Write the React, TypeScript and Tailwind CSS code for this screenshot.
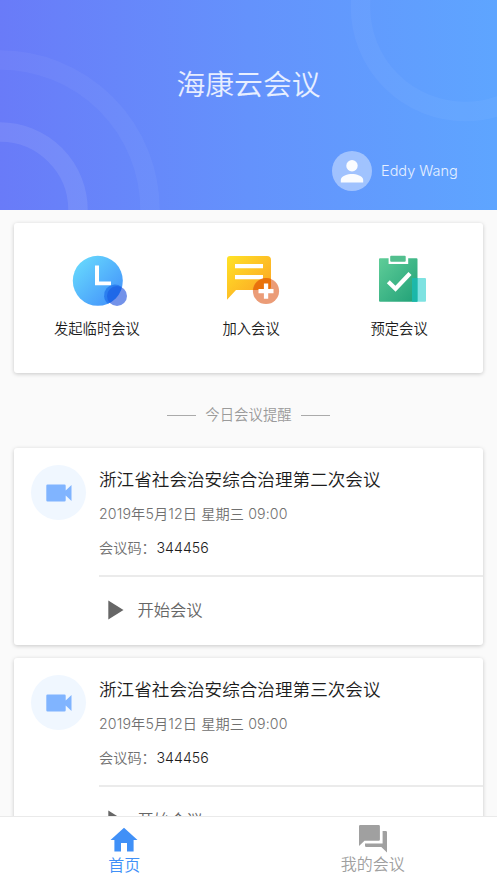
import { useState } from 'react'

type Reuniao = { titulo: string; data: string; codigo: string }

const reunioes: Reuniao[] = [
  { titulo: '浙江省社会治安综合治理第二次会议', data: '2019年5月12日 星期三 09:00', codigo: '344456' },
  { titulo: '浙江省社会治安综合治理第三次会议', data: '2019年5月12日 星期三 09:00', codigo: '344456' }
]

function ClockIcon() {
  return (
    <svg width="56" height="52" viewBox="0 0 56 52">
      <defs>
        <linearGradient id="clock" x1="0" y1="0" x2="1" y2="1">
          <stop offset="0" stopColor="#6be0fd" />
          <stop offset="1" stopColor="#3f8bfb" />
        </linearGradient>
      </defs>
      <circle cx="25.8" cy="25.8" r="25" fill="url(#clock)" />
      <path d="M23 10.5h4v16h12v3.8H23z" fill="#fff" />
      <circle cx="45" cy="41" r="10" fill="#1d4fdb" fillOpacity="0.62" />
      <path d="M49.46 34A25 25 0 0 1 36 48.65A10 10 0 0 1 49.46 32z" fill="#1565e8" fillOpacity="0.6" />
    </svg>
  )
}

function JoinIcon() {
  return (
    <svg width="56" height="52" viewBox="0 0 56 52">
      <defs>
        <linearGradient id="join" x1="0" y1="0" x2="1" y2="1">
          <stop offset="0" stopColor="#ffe326" />
          <stop offset="1" stopColor="#fc9d25" />
        </linearGradient>
      </defs>
      <path d="M4 1h37a4 4 0 0 1 4 4v26a4 4 0 0 1-4 4H10L1 44.8V4a3 3 0 0 1 3-3z" fill="url(#join)" />
      <path d="M9 9h28v4.2H9zM9 20h28v4.2H9z" fill="#fff" />
      <circle cx="40" cy="36" r="13.1" fill="#de5a1c" fillOpacity="0.6" />
      <path d="M27.3 35A13.1 13.1 0 0 1 45 23.9V31a4 4 0 0 1-4 4z" fill="#e86c00" fillOpacity="0.6" />
      <path d="M37.9 28.6h4.3v5.4h5.3v4.3h-5.3v5.4h-4.3v-5.4h-5.4V34h5.4z" fill="#fff" />
    </svg>
  )
}

function ScheduleIcon() {
  return (
    <svg width="56" height="52" viewBox="0 0 56 52">
      <defs>
        <linearGradient id="sched" x1="0" y1="0" x2="1" y2="1">
          <stop offset="0" stopColor="#5fcd98" />
          <stop offset="1" stopColor="#20a077" />
        </linearGradient>
      </defs>
      <path d="M5 3.3h8.6v5.8h19.600V3.3h8.3a1 1 0 0 1 1 1v41.500a1 1 0 0 1-1 1H5a1 1 0 0 1-1-1V4.300a1 1 0 0 1 1-1z" fill="url(#sched)" />
      <rect x="15.200" y="0.800" width="15.500" height="6" rx="1" fill="#52bf8e" />
      <path d="M13.300 26.800l7.200 7L35 18.500" fill="none" stroke="#fff" strokeWidth="4.200" />
      <rect x="37" y="23" width="14" height="23.800" rx="1" fill="#28cfcd" fillOpacity="0.6" />
      <path d="M37 23h5.500v23.800H37z" fill="#16b5a8" fillOpacity="0.7" />
    </svg>
  )
}

const acoes = [
  { label: '发起临时会议', Icon: ClockIcon, box: 'ml-[40px] w-[86px]', pad: 'pl-[18px]' },
  { label: '加入会议', Icon: JoinIcon, box: 'ml-[82.5px] w-[58px]', pad: 'pl-[3px]' },
  { label: '预定会议', Icon: ScheduleIcon, box: 'ml-[90px] w-[58px]', pad: 'pl-[4px]' }
]

function CartaoReuniao({ titulo, data, codigo }: Reuniao) {
  return (
    <article className="flex h-[197px] shrink-0 rounded-[3px] bg-white pl-[17px] shadow-[0_1px_4px_rgba(0,0,0,0.2)]">
      <div className="mt-[17px] flex size-[55px] shrink-0 items-center justify-center rounded-full bg-[#f0f7ff]">
        <svg width="26" height="18" viewBox="0 0 26 18" fill="#80b4ff">
          <path d="M1.5.5h17A1.2 1.2 0 0 1 19.7 1.7V6.5L25.5 1v16l-5.8-5.5v4.8a1.2 1.2 0 0 1-1.2 1.2h-17A1.2 1.2 0 0 1 .3 16.3V1.7A1.2 1.2 0 0 1 1.5.5z" />
        </svg>
      </div>
      <div className="ml-[13px] flex-1">
        <h2 className="mt-[19px] text-[17.6px] leading-[26px] text-[#1c1c1c]">{titulo}</h2>
        <p className="mt-[11px] text-[14.2px] leading-[20px] tracking-[0.12px] text-[#707070]">{data}</p>
        <p className="mt-[14px] flex text-[14.2px] leading-[20px] text-[#707070]">
          <span className="w-[57.5px]">会议码：</span>
          <span className="text-[#1c1c1c]">{codigo}</span>
        </p>
        <div className="mt-[17px] border-t-2 border-[#ebebeb]" />
        <button className="mt-[21px] flex items-center pl-[8.5px] text-[16.3px] leading-[24px] text-[#666]">
          <svg width="16" height="20" viewBox="0 0 16 20" fill="#666">
            <path d="M.3.5L15.5 10 .3 19.5z" />
          </svg>
          <span className="ml-[14px]">开始会议</span>
        </button>
      </div>
    </article>
  )
}

export default function App() {
  const [aba, setAba] = useState<'inicio' | 'reunioes'>('inicio')
  const cor = (ativo: boolean) => (ativo ? 'text-[#4090f7]' : 'text-[#a0a0a0]')

  return (
    <div className="flex h-[883px] w-[497px] flex-col overflow-hidden bg-[#fafafa] font-['Inter','Noto_Sans_CJK_SC',sans-serif] font-[360]">
      <header className="relative flex h-[210px] shrink-0 flex-col bg-linear-to-r from-[#697bf8] via-[#6492fc] to-[#5ea5ff]">
        <svg className="absolute inset-0" width="497" height="210" fill="none" stroke="#fff" strokeWidth="19.5">
          <circle cx="0" cy="210" r="78" strokeOpacity="0.09" />
          <circle cx="0" cy="210" r="150" strokeOpacity="0.045" />
          <circle cx="465" cy="7" r="104.5" strokeOpacity="0.045" />
        </svg>
        <h1 className="relative mt-[65px] text-center text-[28.8px] leading-[40px] text-white/85">海康云会议</h1>
        <div className="relative mt-[46px] ml-[332px] flex items-center">
          <div className="flex size-[40px] items-center justify-center rounded-full bg-white/40">
            <svg width="24" height="24" viewBox="0 0 24 24" fill="#fff" fillOpacity="0.95">
              <circle cx="12" cy="6.8" r="5.7" />
              <path d="M.8 23.5v-2.7c0-3.7 7.2-5.7 11.2-5.7s11.2 2 11.2 5.7v2.7z" />
            </svg>
          </div>
          <span className="ml-[9px] text-[14.5px] font-light text-white/85">Eddy Wang</span>
        </div>
      </header>

      <main className="flex min-h-0 flex-1 flex-col overflow-hidden px-[14px]">
        <section className="mt-[13px] flex h-[150px] shrink-0 rounded-[3px] bg-white pt-[32px] shadow-[0_1px_4px_rgba(0,0,0,0.2)]">
          {acoes.map(({ label, Icon, box, pad }) => (
            <button key={label} className={`flex flex-col items-start ${box}`}>
              <span className={pad}><Icon /></span>
              <span className="mt-[12px] text-[14.3px] leading-[20px] whitespace-nowrap text-[#1c1c1c]">{label}</span>
            </button>
          ))}
        </section>

        <div className="mt-[32px] flex h-[20px] shrink-0 items-center justify-center gap-[9.5px] text-[14.4px] text-[#9b9b9b]">
          <span className="h-px w-[29px] bg-[#aaa]" />
          <span className="leading-[20px]">今日会议提醒</span>
          <span className="h-px w-[29px] bg-[#aaa]" />
        </div>

        <div className="mt-[23px] flex flex-col gap-[13px]">
          {reunioes.map((r) => <CartaoReuniao key={r.titulo} {...r} />)}
        </div>
      </main>

      <nav className="z-10 flex h-[67px] shrink-0 border-t border-[#eaeaea] bg-white text-[16px] leading-[20px]">
        <button className={`flex flex-1 flex-col items-center pt-[10px] ${cor(aba === 'inicio')}`} onClick={() => setAba('inicio')}>
          <svg width="28" height="25" viewBox="0 0 28 25" fill="currentColor">
            <path d="M14 .8L.5 13h3.900v11.500h6.600V16h6v8.500h6.600V13h3.900z" />
          </svg>
          <span className="mt-[3px]">首页</span>
        </button>
        <button className={`flex flex-1 flex-col items-center pt-[8px] ${cor(aba === 'reunioes')}`} onClick={() => setAba('reunioes')}>
          <svg width="28" height="28" viewBox="0 0 28 28" fill="currentColor">
            <path d="M1.2 0h18.500A1.200 1.200 0 0 1 20.900 1.200v13.300a1.200 1.200 0 0 1-1.200 1.200H5.500L0 21V1.200A1.200 1.200 0 0 1 1.200 0z" />
            <path d="M23.600 6h3.200a1.200 1.200 0 0 1 1.200 1.200V27.500L22.300 22H7.200A1.200 1.200 0 0 1 6 20.800v-2.300h17.600z" />
          </svg>
          <span className="mt-px">我的会议</span>
        </button>
      </nav>
    </div>
  )
}
